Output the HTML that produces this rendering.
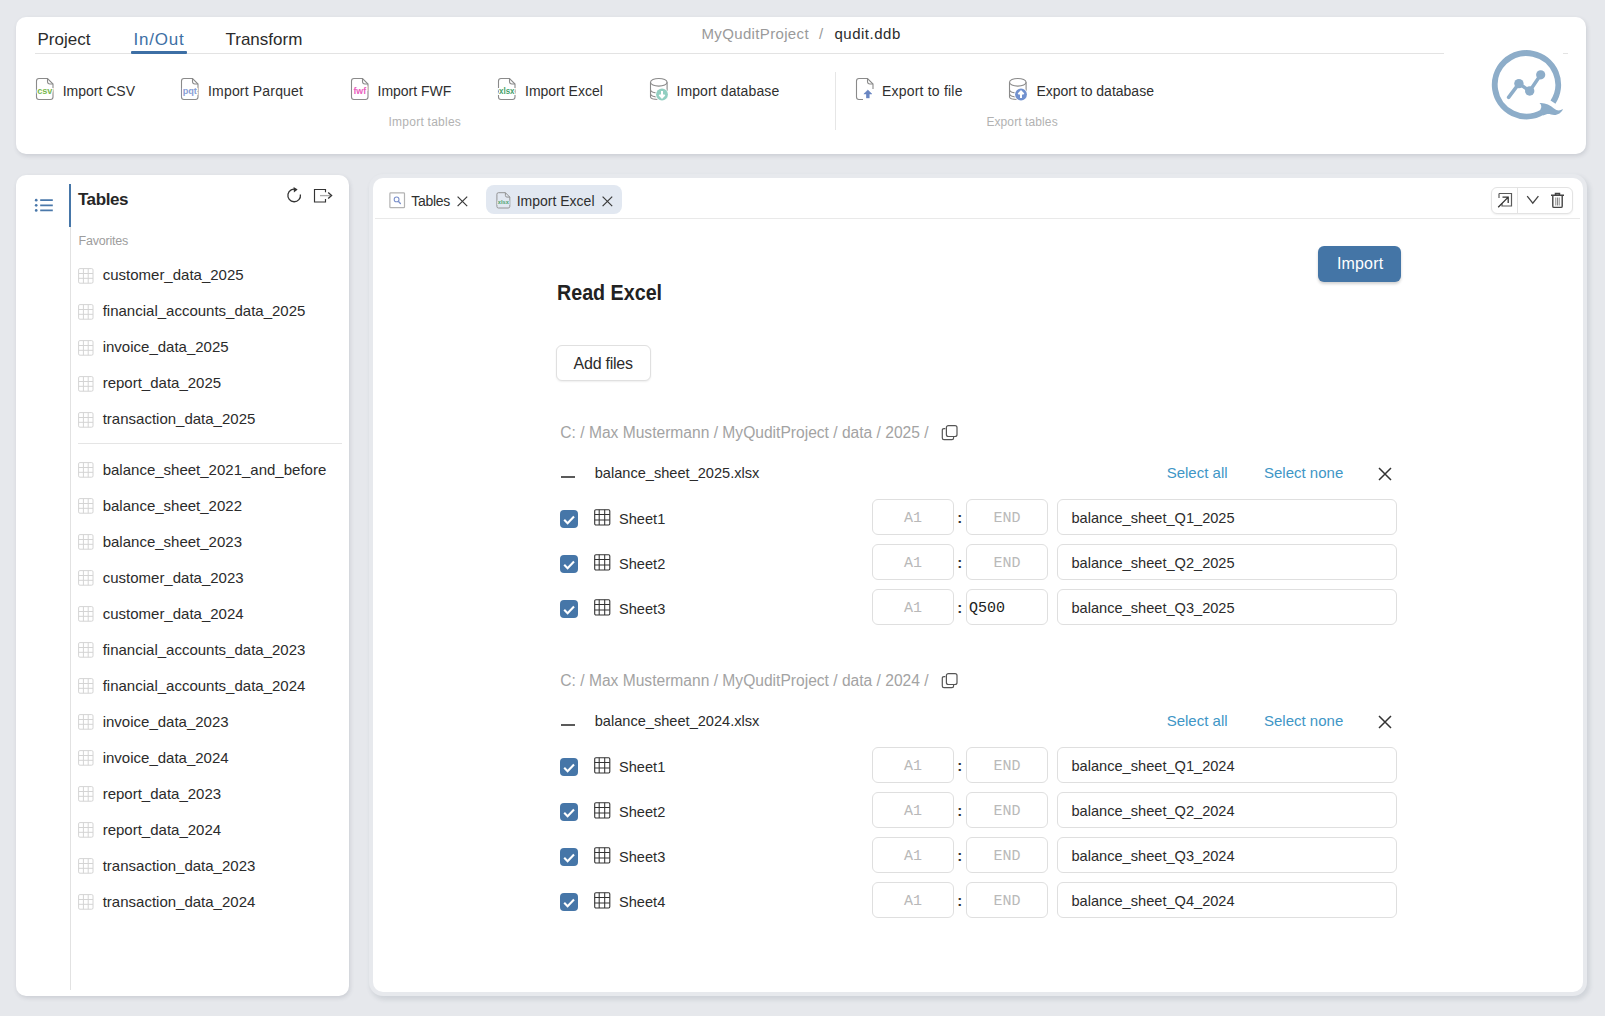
<!DOCTYPE html>
<html><head><meta charset="utf-8">
<style>
html,body{margin:0;padding:0}
body{width:1605px;height:1016px;background:#e6e8ec;position:relative;overflow:hidden;font-family:"Liberation Sans",sans-serif;color:#2b2b2b}
.a{position:absolute;white-space:pre;line-height:1}
.card{position:absolute;background:#fff;border-radius:10px;box-shadow:1px 2px 4px rgba(60,70,90,0.16)}
svg{position:absolute;overflow:visible}
.tb{font-size:14px;color:#2f2f2f}
.grp{font-size:12px;color:#b2b2b2}
.li{font-size:15px;color:#2b2b2b}
.inp{position:absolute;box-sizing:border-box;border:1px solid #dfdfdf;border-radius:6px;height:36px;background:#fff}
.mono{font-family:"Liberation Mono",monospace;font-size:15px;color:#b9b9b9}
.link{font-size:15px;color:#4096c6}
.cb{position:absolute;width:18px;height:18px;border-radius:4px;background:#4676a8}
</style></head><body>

<!-- TOP CARD -->
<div class="card" style="left:16px;top:16.5px;width:1570px;height:137.5px"></div>
<div class="a" style="left:37.5px;top:30.6px;font-size:17px;color:#2b2b2b">Project</div>
<div class="a" style="left:133.5px;top:30.6px;font-size:17px;color:#3d6fa5;letter-spacing:0.8px">In/Out</div>
<div class="a" style="left:225.5px;top:30.6px;font-size:17px;color:#2b2b2b">Transform</div>
<div style="position:absolute;left:35px;top:53px;width:1409px;height:1px;background:#e3e3e3"></div>
<div style="position:absolute;left:1563px;top:53px;width:5px;height:1px;background:#e3e3e3"></div>
<div style="position:absolute;left:131px;top:51px;width:56px;height:3px;background:#3d6fa5;border-radius:1px"></div>
<div class="a" style="left:701.5px;top:26.3px;font-size:15px;color:#9a9a9a;letter-spacing:0.35px">MyQuditProject</div>
<div class="a" style="left:819px;top:26.3px;font-size:15px;color:#9a9a9a">/</div>
<div class="a" style="left:834.5px;top:26.3px;font-size:15px;color:#2b2b2b;letter-spacing:0.5px">qudit.ddb</div>

<!-- toolbar -->
<svg width="0" height="0" style="position:absolute">
<defs>
<g id="doc"><path d="M3,0.5 H11.5 L17,6 V19 Q17,21.5 14.5,21.5 H3 Q0.5,21.5 0.5,19 V3 Q0.5,0.5 3,0.5 Z" fill="#fff" stroke="#8a8a8a" stroke-width="1.1"/><path d="M11.5,0.5 V3.5 Q11.5,6 14,6 H17" fill="none" stroke="#8a8a8a" stroke-width="1.1"/></g>
<g id="db"><ellipse cx="8.8" cy="4.3" rx="8.3" ry="3.8" fill="#fff" stroke="#8a8a8a" stroke-width="1.1"/><path d="M0.5,4.3 V19 Q0.5,21.5 8.8,21.5 Q17.1,21.5 17.1,19 V4.3 M0.5,11.5 Q0.5,15 8.8,15 Q17.1,15 17.1,11.5 M0.5,15.5 Q0.5,19 8.8,19" fill="none" stroke="#8a8a8a" stroke-width="1.1"/></g>
</defs></svg>

<svg style="left:36px;top:78px" width="18" height="23"><use href="#doc"/><text x="8.8" y="16" text-anchor="middle" font-family="Liberation Sans" font-size="9.2" font-weight="700" fill="#79b84e" stroke="#fff" stroke-width="2.2" paint-order="stroke">csv</text></svg>
<div class="a tb" style="left:62.7px;top:83.75px">Import CSV</div>
<svg style="left:181px;top:78px" width="18" height="23"><use href="#doc"/><text x="8.8" y="15.5" text-anchor="middle" font-family="Liberation Sans" font-size="9.2" font-weight="700" fill="#8aa0d6" stroke="#fff" stroke-width="2.2" paint-order="stroke">pqt</text></svg>
<div class="a tb" style="left:208px;top:83.75px;letter-spacing:0.18px">Import Parquet</div>
<svg style="left:351px;top:78px" width="18" height="23"><use href="#doc"/><text x="8.8" y="15.8" text-anchor="middle" font-family="Liberation Sans" font-size="8.8" font-weight="700" fill="#e95cbc" stroke="#fff" stroke-width="2.2" paint-order="stroke">fwf</text></svg>
<div class="a tb" style="left:377.5px;top:83.75px">Import FWF</div>
<svg style="left:498px;top:78px" width="18" height="23"><use href="#doc"/><text x="8.8" y="16" text-anchor="middle" font-family="Liberation Sans" font-size="8.4" font-weight="700" fill="#46a06a" stroke="#fff" stroke-width="2.2" paint-order="stroke" textLength="15.5" lengthAdjust="spacingAndGlyphs">xlsx</text></svg>
<div class="a tb" style="left:525px;top:83.75px">Import Excel</div>
<svg style="left:650px;top:77.5px" width="20" height="23"><use href="#db"/><circle cx="12" cy="16.5" r="6.8" fill="#fff"/><circle cx="12" cy="16.5" r="5.9" fill="#92cfc1"/><path d="M12,13 V19 M9.4,16.8 L12,19.6 L14.6,16.8" fill="none" stroke="#fff" stroke-width="2"/></svg>
<div class="a tb" style="left:676.4px;top:83.75px;letter-spacing:0.12px">Import database</div>
<div class="a grp" style="left:388.5px;top:115.6px;letter-spacing:0.25px">Import tables</div>

<div style="position:absolute;left:835px;top:72px;width:1px;height:58px;background:#e6e6e6"></div>

<svg style="left:856px;top:78px" width="18" height="23"><path d="M7,21.5 H3 Q0.5,21.5 0.5,19 V3 Q0.5,0.5 3,0.5 H11.5 L17,6 V11" fill="none" stroke="#8a8a8a" stroke-width="1.1"/><path d="M11.5,0.5 V3.5 Q11.5,6 14,6 H17" fill="none" stroke="#8a8a8a" stroke-width="1.1"/><path d="M7.9,15.9 L11.85,12 L15.8,15.9 Z" fill="#6a86c2" stroke="#6a86c2" stroke-width="0.6" stroke-linejoin="round"/><rect x="10.15" y="15.3" width="3.4" height="4.9" fill="#6a86c2"/></svg>
<div class="a tb" style="left:882px;top:83.75px;letter-spacing:0.2px">Export to file</div>
<svg style="left:1009px;top:77.5px" width="20" height="23"><use href="#db"/><circle cx="12" cy="16.5" r="6.8" fill="#fff"/><circle cx="12" cy="16.5" r="5.9" fill="#7191cf"/><path d="M12,20 V14 M9.4,16.2 L12,13.4 L14.6,16.2" fill="none" stroke="#fff" stroke-width="2"/></svg>
<div class="a tb" style="left:1036.4px;top:83.75px">Export to database</div>
<div class="a grp" style="left:986.4px;top:115.6px;letter-spacing:0.1px">Export tables</div>

<!-- logo -->
<svg style="left:0;top:0" width="1605" height="200">
<path d="M1542.25,112.25 A31.7,31.7 0 1 1 1553,102.1" fill="none" stroke="#8dadc9" stroke-width="5.9"/>
<path d="M1539.5,103 C1545,102.5 1550,105 1554,108.5 C1557,111 1560,111 1563,109 C1561,114 1556,116 1551,114.5 C1548,113.5 1546,114.5 1543,115.5 L1540.3,109.5 C1542,107 1541.5,104.5 1539.5,103 Z" fill="#8dadc9"/>
<path d="M1508.6,97.4 L1518.9,83.6 L1529.7,91 L1540.7,74.8" fill="none" stroke="#8dadc9" stroke-width="3.5" stroke-linecap="round" stroke-linejoin="round"/>
<circle cx="1518.9" cy="83.6" r="4.7" fill="#8dadc9"/><circle cx="1529.7" cy="91" r="4.7" fill="#8dadc9"/><circle cx="1540.7" cy="74.8" r="4.6" fill="#8dadc9"/>
</svg>


<!-- LEFT PANEL -->
<div class="card" style="left:16px;top:174.5px;width:333px;height:821.5px"></div>
<svg style="left:34px;top:198px" width="20" height="15"><g fill="#4a78aa"><circle cx="2.2" cy="2.2" r="1.35"/><circle cx="2.2" cy="7.3" r="1.35"/><circle cx="2.2" cy="12.4" r="1.35"/></g><path d="M6.2,2.2 H18.8 M6.2,7.3 H18.8 M6.2,12.4 H18.8" stroke="#4a78aa" stroke-width="1.8"/></svg>
<div style="position:absolute;left:69px;top:184px;width:2px;height:43px;background:#4676a8"></div>
<div style="position:absolute;left:70px;top:227px;width:1px;height:763px;background:#e2e2e2"></div>
<div class="a" style="left:77.9px;top:190.9px;font-size:17px;font-weight:700;color:#262626;letter-spacing:-0.4px">Tables</div>
<svg style="left:285px;top:185px" width="18" height="20"><path d="M11.5,4.6 A6.3,6.3 0 1 0 15.4,9.5" fill="none" stroke="#333" stroke-width="1.3"/><path d="M8.6,2 L12.6,4.6 L8.9,7.6 Z" fill="#333"/></svg>
<svg style="left:313px;top:188px" width="22" height="16"><path d="M12.5,4.2 V1.5 H1.5 V14 H12.5 V11" fill="none" stroke="#333" stroke-width="1.15"/><path d="M7,7.6 H17.6" stroke="#aaa" stroke-width="1.3"/><path d="M15.2,4.6 L18.6,7.6 L15.2,10.6" fill="none" stroke="#333" stroke-width="1.3"/></svg>
<div class="a" style="left:78.5px;top:235px;font-size:12.5px;color:#9d9d9d;letter-spacing:-0.2px">Favorites</div>
<svg style="left:77.5px;top:267.6px" width="16" height="16"><rect x="0.6" y="0.6" width="14.4" height="14.6" rx="1.3" fill="none" stroke="#d4d4d4"/><path d="M5.4,0.6 V15.2 M10.2,0.6 V15.2 M0.6,5.5 H15 M0.6,10.3 H15" stroke="#d4d4d4"/></svg><div class="a li" style="left:102.7px;top:266.9px">customer_data_2025</div>
<svg style="left:77.5px;top:303.6px" width="16" height="16"><rect x="0.6" y="0.6" width="14.4" height="14.6" rx="1.3" fill="none" stroke="#d4d4d4"/><path d="M5.4,0.6 V15.2 M10.2,0.6 V15.2 M0.6,5.5 H15 M0.6,10.3 H15" stroke="#d4d4d4"/></svg><div class="a li" style="left:102.7px;top:302.9px">financial_accounts_data_2025</div>
<svg style="left:77.5px;top:339.6px" width="16" height="16"><rect x="0.6" y="0.6" width="14.4" height="14.6" rx="1.3" fill="none" stroke="#d4d4d4"/><path d="M5.4,0.6 V15.2 M10.2,0.6 V15.2 M0.6,5.5 H15 M0.6,10.3 H15" stroke="#d4d4d4"/></svg><div class="a li" style="left:102.7px;top:338.9px">invoice_data_2025</div>
<svg style="left:77.5px;top:375.6px" width="16" height="16"><rect x="0.6" y="0.6" width="14.4" height="14.6" rx="1.3" fill="none" stroke="#d4d4d4"/><path d="M5.4,0.6 V15.2 M10.2,0.6 V15.2 M0.6,5.5 H15 M0.6,10.3 H15" stroke="#d4d4d4"/></svg><div class="a li" style="left:102.7px;top:374.9px">report_data_2025</div>
<svg style="left:77.5px;top:411.6px" width="16" height="16"><rect x="0.6" y="0.6" width="14.4" height="14.6" rx="1.3" fill="none" stroke="#d4d4d4"/><path d="M5.4,0.6 V15.2 M10.2,0.6 V15.2 M0.6,5.5 H15 M0.6,10.3 H15" stroke="#d4d4d4"/></svg><div class="a li" style="left:102.7px;top:410.9px">transaction_data_2025</div>
<div style="position:absolute;left:78px;top:443px;width:264px;height:1px;background:#e5e5e5"></div>
<svg style="left:77.5px;top:462.2px" width="16" height="16"><rect x="0.6" y="0.6" width="14.4" height="14.6" rx="1.3" fill="none" stroke="#d4d4d4"/><path d="M5.4,0.6 V15.2 M10.2,0.6 V15.2 M0.6,5.5 H15 M0.6,10.3 H15" stroke="#d4d4d4"/></svg><div class="a li" style="left:102.7px;top:461.5px">balance_sheet_2021_and_before</div>
<svg style="left:77.5px;top:498.2px" width="16" height="16"><rect x="0.6" y="0.6" width="14.4" height="14.6" rx="1.3" fill="none" stroke="#d4d4d4"/><path d="M5.4,0.6 V15.2 M10.2,0.6 V15.2 M0.6,5.5 H15 M0.6,10.3 H15" stroke="#d4d4d4"/></svg><div class="a li" style="left:102.7px;top:497.5px">balance_sheet_2022</div>
<svg style="left:77.5px;top:534.2px" width="16" height="16"><rect x="0.6" y="0.6" width="14.4" height="14.6" rx="1.3" fill="none" stroke="#d4d4d4"/><path d="M5.4,0.6 V15.2 M10.2,0.6 V15.2 M0.6,5.5 H15 M0.6,10.3 H15" stroke="#d4d4d4"/></svg><div class="a li" style="left:102.7px;top:533.5px">balance_sheet_2023</div>
<svg style="left:77.5px;top:570.2px" width="16" height="16"><rect x="0.6" y="0.6" width="14.4" height="14.6" rx="1.3" fill="none" stroke="#d4d4d4"/><path d="M5.4,0.6 V15.2 M10.2,0.6 V15.2 M0.6,5.5 H15 M0.6,10.3 H15" stroke="#d4d4d4"/></svg><div class="a li" style="left:102.7px;top:569.5px">customer_data_2023</div>
<svg style="left:77.5px;top:606.2px" width="16" height="16"><rect x="0.6" y="0.6" width="14.4" height="14.6" rx="1.3" fill="none" stroke="#d4d4d4"/><path d="M5.4,0.6 V15.2 M10.2,0.6 V15.2 M0.6,5.5 H15 M0.6,10.3 H15" stroke="#d4d4d4"/></svg><div class="a li" style="left:102.7px;top:605.5px">customer_data_2024</div>
<svg style="left:77.5px;top:642.2px" width="16" height="16"><rect x="0.6" y="0.6" width="14.4" height="14.6" rx="1.3" fill="none" stroke="#d4d4d4"/><path d="M5.4,0.6 V15.2 M10.2,0.6 V15.2 M0.6,5.5 H15 M0.6,10.3 H15" stroke="#d4d4d4"/></svg><div class="a li" style="left:102.7px;top:641.5px">financial_accounts_data_2023</div>
<svg style="left:77.5px;top:678.2px" width="16" height="16"><rect x="0.6" y="0.6" width="14.4" height="14.6" rx="1.3" fill="none" stroke="#d4d4d4"/><path d="M5.4,0.6 V15.2 M10.2,0.6 V15.2 M0.6,5.5 H15 M0.6,10.3 H15" stroke="#d4d4d4"/></svg><div class="a li" style="left:102.7px;top:677.5px">financial_accounts_data_2024</div>
<svg style="left:77.5px;top:714.2px" width="16" height="16"><rect x="0.6" y="0.6" width="14.4" height="14.6" rx="1.3" fill="none" stroke="#d4d4d4"/><path d="M5.4,0.6 V15.2 M10.2,0.6 V15.2 M0.6,5.5 H15 M0.6,10.3 H15" stroke="#d4d4d4"/></svg><div class="a li" style="left:102.7px;top:713.5px">invoice_data_2023</div>
<svg style="left:77.5px;top:750.2px" width="16" height="16"><rect x="0.6" y="0.6" width="14.4" height="14.6" rx="1.3" fill="none" stroke="#d4d4d4"/><path d="M5.4,0.6 V15.2 M10.2,0.6 V15.2 M0.6,5.5 H15 M0.6,10.3 H15" stroke="#d4d4d4"/></svg><div class="a li" style="left:102.7px;top:749.5px">invoice_data_2024</div>
<svg style="left:77.5px;top:786.2px" width="16" height="16"><rect x="0.6" y="0.6" width="14.4" height="14.6" rx="1.3" fill="none" stroke="#d4d4d4"/><path d="M5.4,0.6 V15.2 M10.2,0.6 V15.2 M0.6,5.5 H15 M0.6,10.3 H15" stroke="#d4d4d4"/></svg><div class="a li" style="left:102.7px;top:785.5px">report_data_2023</div>
<svg style="left:77.5px;top:822.2px" width="16" height="16"><rect x="0.6" y="0.6" width="14.4" height="14.6" rx="1.3" fill="none" stroke="#d4d4d4"/><path d="M5.4,0.6 V15.2 M10.2,0.6 V15.2 M0.6,5.5 H15 M0.6,10.3 H15" stroke="#d4d4d4"/></svg><div class="a li" style="left:102.7px;top:821.5px">report_data_2024</div>
<svg style="left:77.5px;top:858.2px" width="16" height="16"><rect x="0.6" y="0.6" width="14.4" height="14.6" rx="1.3" fill="none" stroke="#d4d4d4"/><path d="M5.4,0.6 V15.2 M10.2,0.6 V15.2 M0.6,5.5 H15 M0.6,10.3 H15" stroke="#d4d4d4"/></svg><div class="a li" style="left:102.7px;top:857.5px">transaction_data_2023</div>
<svg style="left:77.5px;top:894.2px" width="16" height="16"><rect x="0.6" y="0.6" width="14.4" height="14.6" rx="1.3" fill="none" stroke="#d4d4d4"/><path d="M5.4,0.6 V15.2 M10.2,0.6 V15.2 M0.6,5.5 H15 M0.6,10.3 H15" stroke="#d4d4d4"/></svg><div class="a li" style="left:102.7px;top:893.5px">transaction_data_2024</div>


<!-- MAIN PANEL -->
<div class="card" style="left:373px;top:178px;width:1209.5px;height:813.8px;box-shadow:0 0 0 4px #e7e9ed, 2px 3px 4px 5px rgba(60,70,90,0.12)"></div>
<svg style="left:388.5px;top:191.5px" width="17" height="17"><rect x="0.9" y="0.9" width="14.6" height="14.8" rx="0.8" fill="none" stroke="#b3b3b3" stroke-width="1.2"/><circle cx="7.6" cy="7.4" r="2.4" fill="none" stroke="#7d92cc" stroke-width="1.1"/><path d="M9.3,9.2 L11.4,11.5" stroke="#7d92cc" stroke-width="1.3" stroke-linecap="round"/></svg>
<div class="a" style="left:411.3px;top:193.9px;font-size:14px;color:#2f2f2f;letter-spacing:-0.3px">Tables</div>
<svg style="left:456.5px;top:196px" width="11" height="11"><path d="M0.6,0.6 L10.2,10.2 M10.2,0.6 L0.6,10.2" stroke="#3a3a3a" stroke-width="1.2"/></svg>
<div style="position:absolute;left:486px;top:185px;width:136px;height:29px;border-radius:8px;background:#e2e8f1"></div>
<svg style="left:495.5px;top:191.5px" width="15" height="18"><path d="M2.4,0.7 H9.4 L13.8,5.1 V14.4 Q13.8,16 12.2,16 H2.4 Q0.9,16 0.9,14.4 V2.3 Q0.9,0.7 2.4,0.7 Z" fill="none" stroke="#8a8a8a" stroke-width="0.9"/><path d="M9.4,0.7 V3.5 Q9.4,5.1 11,5.1 H13.8" fill="none" stroke="#8a8a8a" stroke-width="0.9"/><rect x="1.2" y="8.6" width="12.4" height="4.4" fill="#e2e8f1"/><text x="7.3" y="12.3" text-anchor="middle" font-family="Liberation Sans" font-size="5.5" font-weight="700" fill="#4aa36e" textLength="11" lengthAdjust="spacingAndGlyphs">xlsx</text></svg>
<div class="a" style="left:516.7px;top:194.1px;font-size:14px;color:#2f2f2f">Import Excel</div>
<svg style="left:601.8px;top:196px" width="11" height="11"><path d="M0.6,0.6 L10.2,10.2 M10.2,0.6 L0.6,10.2" stroke="#3a3a3a" stroke-width="1.2"/></svg>
<div style="position:absolute;left:375px;top:218px;width:1205px;height:1px;background:#e9e9e9"></div>

<div style="position:absolute;left:1491px;top:187px;width:82px;height:27px;box-sizing:border-box;border:1px solid #e3e3e3;border-radius:6px;background:#fff;box-shadow:0 1px 2px rgba(0,0,0,0.06)"></div>
<div style="position:absolute;left:1517px;top:188px;width:1px;height:25px;background:#e3e3e3"></div>
<svg style="left:1497px;top:192px" width="16" height="17"><path d="M2,1.5 H14.5 V14 H5 V11.5" fill="none" stroke="#5a5a5a" stroke-width="1.2"/><path d="M2,1.5 V6" fill="none" stroke="#5a5a5a" stroke-width="1.2"/><path d="M1.2,15.2 L11,5.4 M5.5,5.2 H11.2 V10.9" fill="none" stroke="#333" stroke-width="1.3"/></svg>
<svg style="left:1526px;top:195px" width="14" height="10"><path d="M1.2,1.2 L6.8,8.2 L12.4,1.2" fill="none" stroke="#444" stroke-width="1.3"/></svg>
<svg style="left:1549.5px;top:191.5px" width="15" height="17"><path d="M1,3.3 H14 M5.5,3 V1.6 H9.5 V3" fill="none" stroke="#444" stroke-width="1.5"/><path d="M2.8,4 V14.2 Q2.8,15.4 4,15.4 H11 Q12.2,15.4 12.2,14.2 V4" fill="none" stroke="#444" stroke-width="1.4"/><path d="M5.8,5.5 V13.5 M7.5,5.5 V13.5 M9.2,5.5 V13.5" stroke="#7a7a7a" stroke-width="0.9"/></svg>

<div style="position:absolute;left:1318px;top:246px;width:83px;height:36px;border-radius:6px;background:#4475a6;box-shadow:0 2px 3px rgba(0,0,0,0.18)"></div>
<div class="a" style="left:1337px;top:256.4px;font-size:16px;color:#fff;letter-spacing:0.15px">Import</div>

<div class="a" style="left:556.8px;top:281.9px;font-size:22px;font-weight:700;color:#222;transform:scaleX(0.895);transform-origin:0 0">Read Excel</div>

<div style="position:absolute;left:556px;top:345px;width:95px;height:36px;box-sizing:border-box;border:1px solid #e0e0e0;border-radius:6px;background:#fff;box-shadow:0 1px 2px rgba(0,0,0,0.07)"></div>
<div class="a" style="left:573.6px;top:356.4px;font-size:16px;color:#2b2b2b;letter-spacing:-0.25px">Add files</div>
<div class="a" style="left:560.3px;top:424.8px;font-size:15.6px;color:#a3a3a3;letter-spacing:0px">C: / Max Mustermann / MyQuditProject / data / 2025 /</div>
<svg style="left:940px;top:424.5px" width="20" height="18"><path d="M5.4,3.6 H4 Q2.3,3.6 2.3,5.3 V12.9 Q2.3,14.6 4,14.6 H11.9 Q13.6,14.6 13.6,12.9 V11.5" fill="none" stroke="#555" stroke-width="1.2"/><rect x="6.4" y="0.6" width="10.6" height="10.9" rx="2" fill="#fff" stroke="#555" stroke-width="1.2"/></svg>
<div style="position:absolute;left:561px;top:476.0px;width:13.5px;height:2px;background:#5a5a5a"></div>
<div class="a" style="left:594.7px;top:465.9px;font-size:14.6px;color:#2b2b2b">balance_sheet_2025.xlsx</div>
<div class="a link" style="left:1166.7px;top:465.2px">Select all</div>
<div class="a link" style="left:1264px;top:465.2px">Select none</div>
<svg style="left:1377.5px;top:467.0px" width="14" height="14"><path d="M1,1 L13,13 M13,1 L1,13" stroke="#333" stroke-width="1.5"/></svg>
<div class="cb" style="left:560px;top:509.6px"></div><svg style="left:560px;top:509.6px" width="18" height="18"><path d="M4.2,9.8 L7.6,13.2 L14,6.6" fill="none" stroke="#fff" stroke-width="2.1"/></svg>
<svg style="left:593.5px;top:509.2px" width="17" height="17"><rect x="0.7" y="0.7" width="15.1" height="15.3" rx="1.2" fill="none" stroke="#333" stroke-width="1.1"/><path d="M5.2,0.7 V16 M10.7,0.7 V16 M0.7,5.5 H15.8 M0.7,11 H15.8" stroke="#333" stroke-width="1.05"/></svg>
<div class="a li" style="left:619px;top:511.7px;font-size:14.6px">Sheet1</div>
<div class="inp" style="left:872px;top:499.0px;width:82px"></div><div class="a mono" style="left:872px;width:82px;text-align:center;top:510.7px">A1</div>
<div class="a" style="left:957.3px;top:509.9px;font-size:15px;font-weight:700;color:#333">:</div>
<div class="inp" style="left:966px;top:499.0px;width:82px"></div><div class="a mono" style="left:966px;width:82px;text-align:center;top:510.7px">END</div>
<div class="inp" style="left:1057px;top:499.0px;width:340px"></div><div class="a" style="left:1071.5px;top:510.5px;font-size:14.6px;color:#2b2b2b">balance_sheet_Q1_2025</div>
<div class="cb" style="left:560px;top:554.6px"></div><svg style="left:560px;top:554.6px" width="18" height="18"><path d="M4.2,9.8 L7.6,13.2 L14,6.6" fill="none" stroke="#fff" stroke-width="2.1"/></svg>
<svg style="left:593.5px;top:554.2px" width="17" height="17"><rect x="0.7" y="0.7" width="15.1" height="15.3" rx="1.2" fill="none" stroke="#333" stroke-width="1.1"/><path d="M5.2,0.7 V16 M10.7,0.7 V16 M0.7,5.5 H15.8 M0.7,11 H15.8" stroke="#333" stroke-width="1.05"/></svg>
<div class="a li" style="left:619px;top:556.7px;font-size:14.6px">Sheet2</div>
<div class="inp" style="left:872px;top:544.0px;width:82px"></div><div class="a mono" style="left:872px;width:82px;text-align:center;top:555.7px">A1</div>
<div class="a" style="left:957.3px;top:554.9px;font-size:15px;font-weight:700;color:#333">:</div>
<div class="inp" style="left:966px;top:544.0px;width:82px"></div><div class="a mono" style="left:966px;width:82px;text-align:center;top:555.7px">END</div>
<div class="inp" style="left:1057px;top:544.0px;width:340px"></div><div class="a" style="left:1071.5px;top:555.5px;font-size:14.6px;color:#2b2b2b">balance_sheet_Q2_2025</div>
<div class="cb" style="left:560px;top:599.6px"></div><svg style="left:560px;top:599.6px" width="18" height="18"><path d="M4.2,9.8 L7.6,13.2 L14,6.6" fill="none" stroke="#fff" stroke-width="2.1"/></svg>
<svg style="left:593.5px;top:599.2px" width="17" height="17"><rect x="0.7" y="0.7" width="15.1" height="15.3" rx="1.2" fill="none" stroke="#333" stroke-width="1.1"/><path d="M5.2,0.7 V16 M10.7,0.7 V16 M0.7,5.5 H15.8 M0.7,11 H15.8" stroke="#333" stroke-width="1.05"/></svg>
<div class="a li" style="left:619px;top:601.7px;font-size:14.6px">Sheet3</div>
<div class="inp" style="left:872px;top:589.0px;width:82px"></div><div class="a mono" style="left:872px;width:82px;text-align:center;top:600.7px">A1</div>
<div class="a" style="left:957.3px;top:599.9px;font-size:15px;font-weight:700;color:#333">:</div>
<div class="inp" style="left:966px;top:589.0px;width:82px"></div><div class="a mono" style="left:969px;top:600.7px;color:#222">Q500</div>
<div class="inp" style="left:1057px;top:589.0px;width:340px"></div><div class="a" style="left:1071.5px;top:600.5px;font-size:14.6px;color:#2b2b2b">balance_sheet_Q3_2025</div>
<div class="a" style="left:560.3px;top:672.8px;font-size:15.6px;color:#a3a3a3;letter-spacing:0px">C: / Max Mustermann / MyQuditProject / data / 2024 /</div>
<svg style="left:940px;top:672.5px" width="20" height="18"><path d="M5.4,3.6 H4 Q2.3,3.6 2.3,5.3 V12.9 Q2.3,14.6 4,14.6 H11.9 Q13.6,14.6 13.6,12.9 V11.5" fill="none" stroke="#555" stroke-width="1.2"/><rect x="6.4" y="0.6" width="10.6" height="10.9" rx="2" fill="#fff" stroke="#555" stroke-width="1.2"/></svg>
<div style="position:absolute;left:561px;top:724.0px;width:13.5px;height:2px;background:#5a5a5a"></div>
<div class="a" style="left:594.7px;top:713.9px;font-size:14.6px;color:#2b2b2b">balance_sheet_2024.xlsx</div>
<div class="a link" style="left:1166.7px;top:713.2px">Select all</div>
<div class="a link" style="left:1264px;top:713.2px">Select none</div>
<svg style="left:1377.5px;top:715.0px" width="14" height="14"><path d="M1,1 L13,13 M13,1 L1,13" stroke="#333" stroke-width="1.5"/></svg>
<div class="cb" style="left:560px;top:757.6px"></div><svg style="left:560px;top:757.6px" width="18" height="18"><path d="M4.2,9.8 L7.6,13.2 L14,6.6" fill="none" stroke="#fff" stroke-width="2.1"/></svg>
<svg style="left:593.5px;top:757.2px" width="17" height="17"><rect x="0.7" y="0.7" width="15.1" height="15.3" rx="1.2" fill="none" stroke="#333" stroke-width="1.1"/><path d="M5.2,0.7 V16 M10.7,0.7 V16 M0.7,5.5 H15.8 M0.7,11 H15.8" stroke="#333" stroke-width="1.05"/></svg>
<div class="a li" style="left:619px;top:759.7px;font-size:14.6px">Sheet1</div>
<div class="inp" style="left:872px;top:747.0px;width:82px"></div><div class="a mono" style="left:872px;width:82px;text-align:center;top:758.7px">A1</div>
<div class="a" style="left:957.3px;top:757.9px;font-size:15px;font-weight:700;color:#333">:</div>
<div class="inp" style="left:966px;top:747.0px;width:82px"></div><div class="a mono" style="left:966px;width:82px;text-align:center;top:758.7px">END</div>
<div class="inp" style="left:1057px;top:747.0px;width:340px"></div><div class="a" style="left:1071.5px;top:758.5px;font-size:14.6px;color:#2b2b2b">balance_sheet_Q1_2024</div>
<div class="cb" style="left:560px;top:802.6px"></div><svg style="left:560px;top:802.6px" width="18" height="18"><path d="M4.2,9.8 L7.6,13.2 L14,6.6" fill="none" stroke="#fff" stroke-width="2.1"/></svg>
<svg style="left:593.5px;top:802.2px" width="17" height="17"><rect x="0.7" y="0.7" width="15.1" height="15.3" rx="1.2" fill="none" stroke="#333" stroke-width="1.1"/><path d="M5.2,0.7 V16 M10.7,0.7 V16 M0.7,5.5 H15.8 M0.7,11 H15.8" stroke="#333" stroke-width="1.05"/></svg>
<div class="a li" style="left:619px;top:804.7px;font-size:14.6px">Sheet2</div>
<div class="inp" style="left:872px;top:792.0px;width:82px"></div><div class="a mono" style="left:872px;width:82px;text-align:center;top:803.7px">A1</div>
<div class="a" style="left:957.3px;top:802.9px;font-size:15px;font-weight:700;color:#333">:</div>
<div class="inp" style="left:966px;top:792.0px;width:82px"></div><div class="a mono" style="left:966px;width:82px;text-align:center;top:803.7px">END</div>
<div class="inp" style="left:1057px;top:792.0px;width:340px"></div><div class="a" style="left:1071.5px;top:803.5px;font-size:14.6px;color:#2b2b2b">balance_sheet_Q2_2024</div>
<div class="cb" style="left:560px;top:847.6px"></div><svg style="left:560px;top:847.6px" width="18" height="18"><path d="M4.2,9.8 L7.6,13.2 L14,6.6" fill="none" stroke="#fff" stroke-width="2.1"/></svg>
<svg style="left:593.5px;top:847.2px" width="17" height="17"><rect x="0.7" y="0.7" width="15.1" height="15.3" rx="1.2" fill="none" stroke="#333" stroke-width="1.1"/><path d="M5.2,0.7 V16 M10.7,0.7 V16 M0.7,5.5 H15.8 M0.7,11 H15.8" stroke="#333" stroke-width="1.05"/></svg>
<div class="a li" style="left:619px;top:849.7px;font-size:14.6px">Sheet3</div>
<div class="inp" style="left:872px;top:837.0px;width:82px"></div><div class="a mono" style="left:872px;width:82px;text-align:center;top:848.7px">A1</div>
<div class="a" style="left:957.3px;top:847.9px;font-size:15px;font-weight:700;color:#333">:</div>
<div class="inp" style="left:966px;top:837.0px;width:82px"></div><div class="a mono" style="left:966px;width:82px;text-align:center;top:848.7px">END</div>
<div class="inp" style="left:1057px;top:837.0px;width:340px"></div><div class="a" style="left:1071.5px;top:848.5px;font-size:14.6px;color:#2b2b2b">balance_sheet_Q3_2024</div>
<div class="cb" style="left:560px;top:892.6px"></div><svg style="left:560px;top:892.6px" width="18" height="18"><path d="M4.2,9.8 L7.6,13.2 L14,6.6" fill="none" stroke="#fff" stroke-width="2.1"/></svg>
<svg style="left:593.5px;top:892.2px" width="17" height="17"><rect x="0.7" y="0.7" width="15.1" height="15.3" rx="1.2" fill="none" stroke="#333" stroke-width="1.1"/><path d="M5.2,0.7 V16 M10.7,0.7 V16 M0.7,5.5 H15.8 M0.7,11 H15.8" stroke="#333" stroke-width="1.05"/></svg>
<div class="a li" style="left:619px;top:894.7px;font-size:14.6px">Sheet4</div>
<div class="inp" style="left:872px;top:882.0px;width:82px"></div><div class="a mono" style="left:872px;width:82px;text-align:center;top:893.7px">A1</div>
<div class="a" style="left:957.3px;top:892.9px;font-size:15px;font-weight:700;color:#333">:</div>
<div class="inp" style="left:966px;top:882.0px;width:82px"></div><div class="a mono" style="left:966px;width:82px;text-align:center;top:893.7px">END</div>
<div class="inp" style="left:1057px;top:882.0px;width:340px"></div><div class="a" style="left:1071.5px;top:893.5px;font-size:14.6px;color:#2b2b2b">balance_sheet_Q4_2024</div>

</body></html>
